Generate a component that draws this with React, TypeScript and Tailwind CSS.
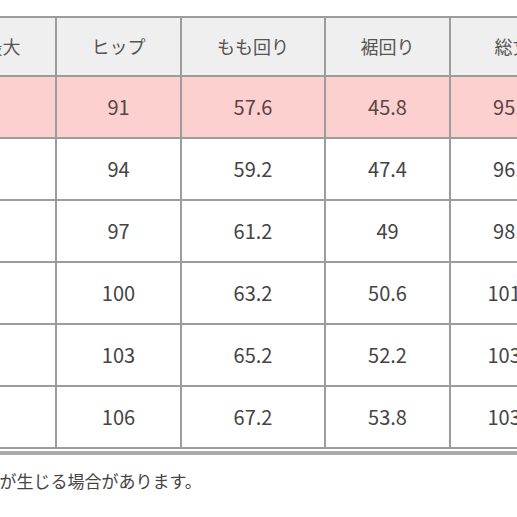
const header = ["幅最大", "ヒップ", "もも回り", "裾回り", "総丈"];

const rows = [
  ["", "91", "57.6", "45.8", "95.6"],
  ["", "94", "59.2", "47.4", "96.8"],
  ["", "97", "61.2", "49", "98.2"],
  ["", "100", "63.2", "50.6", "101.4"],
  ["", "103", "65.2", "52.2", "103.2"],
  ["", "106", "67.2", "53.8", "103.8"],
];

const widths = ["w-[125px]", "w-[125px]", "w-[144px]", "w-[125px]", "w-[125px]"];

export default function App() {
  return (
    <div
      className="w-[517px] h-[517px] overflow-hidden bg-white text-[#444]"
      style={{ fontFamily: '"Noto Sans CJK JP", "Noto Sans", sans-serif' }}
    >
      <div className="pt-[16px]">
        <table className="ml-[-70px] table-fixed border-collapse w-[644px]">
          <colgroup>
            {widths.map((w, i) => (
              <col key={i} className={w} />
            ))}
          </colgroup>
          <thead>
            <tr className="h-[59px] bg-[#efefef]">
              {header.map((h, i) => (
                <th
                  key={i}
                  className="border-2 border-[#9c9c9c] text-center text-[18px] font-normal text-[#555] whitespace-nowrap"
                >
                  {h}
                </th>
              ))}
            </tr>
          </thead>
          <tbody>
            {rows.map((r, ri) => (
              <tr
                key={ri}
                className={ri === 0 ? "h-[62px] bg-[#fbd0cf] text-[#5a4444]" : "h-[62px] bg-white"}
              >
                {r.map((c, ci) => (
                  <td
                    key={ci}
                    className="border-2 border-[#9c9c9c] text-center text-[20px] whitespace-nowrap"
                  >
                    {c}
                  </td>
                ))}
              </tr>
            ))}
          </tbody>
        </table>
        <div className="mt-[2px] h-[4px] w-full bg-[#aaaaaa]" />
        <p className="mt-[14px] ml-[-170px] whitespace-nowrap text-[17px] leading-[24px] text-[#444]">
          サイズには多少の誤差が生じる場合があります。
        </p>
      </div>
    </div>
  );
}
